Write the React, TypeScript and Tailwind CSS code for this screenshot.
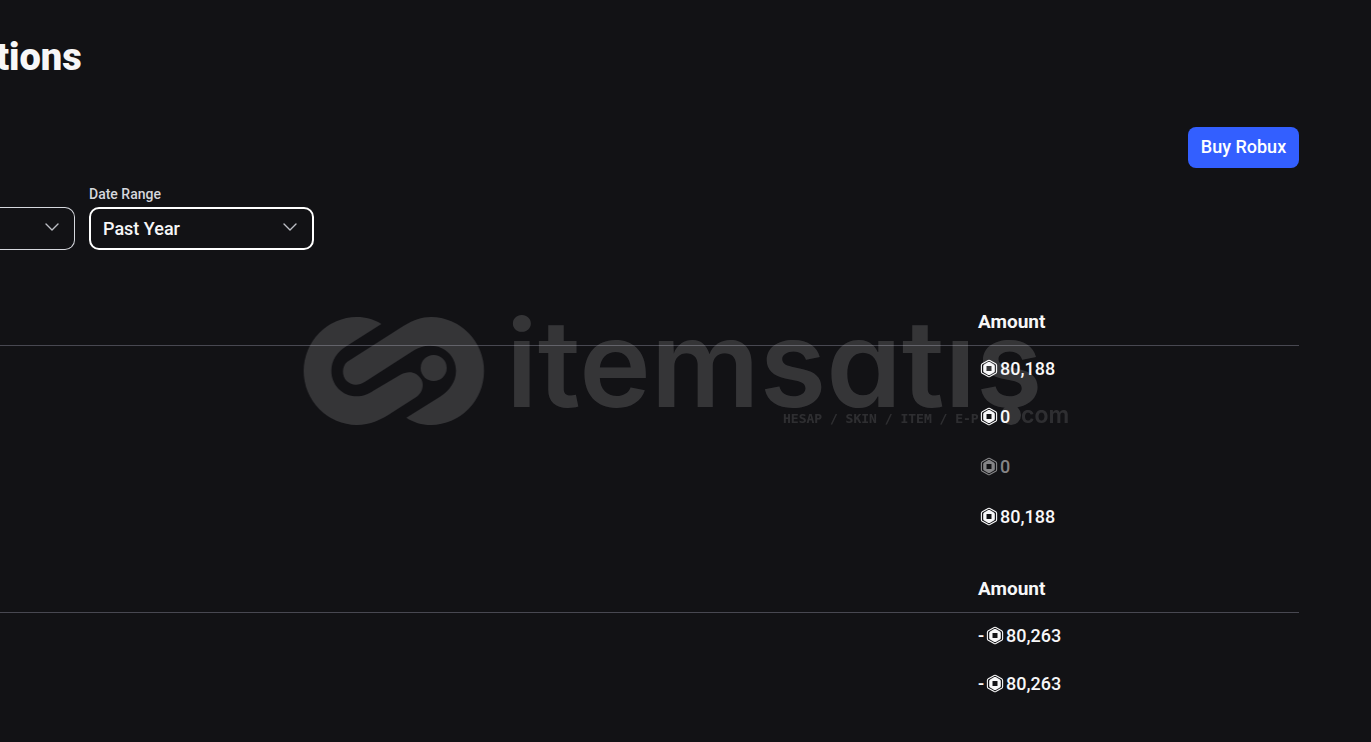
import { useState } from 'react'
import { ChevronDown } from 'lucide-react'

type Row = { amount: string; negative?: boolean; muted?: boolean }

const incoming: Row[] = [
  { amount: '80,188' },
  { amount: '0' },
  { amount: '0', muted: true },
  { amount: '80,188' },
]

const outgoing: Row[] = [
  { amount: '80,263', negative: true },
  { amount: '80,263', negative: true },
]

function RobuxIcon() {
  return (
    <svg width="18" height="20" viewBox="0 0 18 20" fill="none" aria-hidden="true">
      <path
        d="M8.2 1.4Q9 1 9.8 1.4L15.7 4.7Q16.6 5.3 16.6 6.3V12.7Q16.6 13.7 15.7 14.3L9.8 17.6Q9 18 8.2 17.6L2.3 14.3Q1.4 13.7 1.4 12.7V6.3Q1.4 5.3 2.3 4.7Z"
        stroke="currentColor"
        strokeWidth="1.1"
        strokeLinejoin="round"
      />
      <path
        fillRule="evenodd"
        fill="currentColor"
        d="M8.2 3.1Q9 2.7 9.8 3.1L13.9 5.4Q14.8 5.9 14.8 6.9V12.1Q14.8 13.1 13.9 13.6L9.8 15.9Q9 16.3 8.2 15.9L4.1 13.6Q3.2 13.1 3.2 12.1V6.9Q3.2 5.9 4.1 5.4ZM6.5 7V12H11.5V7Z"
      />
    </svg>
  )
}

function AmountTable({ rows }: { rows: Row[] }) {
  return (
    <table className="w-full table-fixed border-collapse text-left text-lg">
      <thead>
        <tr className="h-[47px] border-b border-[#484851]">
          <td />
          <th scope="col" className="w-[321px] pt-0.5 text-[19px] font-bold">Amount</th>
        </tr>
      </thead>
      <tbody className="font-medium">
        {rows.map((row, i) => (
          <tr key={i} className={i < 1 ? 'h-[46px]' : 'h-[50px]'}>
            <td />
            <td className={row.muted ? 'pt-0.5 text-[#858587]' : 'pt-0.5'}>
              <span className={`flex items-center gap-0.5 ${row.negative ? '' : 'pl-0.5'}`}>
                {row.negative && <span className="w-1.5">-</span>}
                <RobuxIcon />
                {row.amount}
              </span>
            </td>
          </tr>
        ))}
      </tbody>
    </table>
  )
}

function Watermark() {
  return (
    <div className="pointer-events-none fixed inset-0 flex items-center justify-center text-white">
      <svg width="766" height="108" viewBox="0 0 766 108" fill="currentColor" className="overflow-visible">
        <g opacity="0.15">
          <g transform="translate(-13 -17) scale(0.33333)">
            <path d="M274 72C252 58 228 51 200 51A160 162 0 0 0 41 213A160 162 0 0 0 200 375C240 375 275 358 305 338L380 290C400 276 402 250 393 237C380 215 355 210 330 225L250 272C235 282 220 289 200 289C155 289 124 253 124 213C124 180 142 155 170 138Z" />
            <path d="M172 185L340 78C370 60 395 51 423 51A160 162 0 0 1 582 213A160 162 0 0 1 423 375C395 375 370 367 349 353L450 290C480 270 498 245 498 212C498 170 465 137 422 137C400 137 385 142 365 155L225 245C205 258 185 257 170 243C155 228 155 198 172 185Z" />
            <circle cx="431" cy="204" r="39" />
          </g>
          <text x="203" y="90" fontSize="121" className="font-['Inter',sans-serif] font-semibold [font-feature-settings:'cv11']">
            itemsatıs
          </text>
          <circle cx="708" cy="98" r="10" />
        </g>
        <text x="480" y="106" fontSize="13" opacity="0.12" className="font-['DejaVu_Sans_Mono',monospace] font-bold">
          HESAP / SKIN / ITEM / E-P
        </text>
        <text x="718" y="106" fontSize="23" opacity="0.12" className="font-['Inter',sans-serif] font-semibold">
          com
        </text>
      </svg>
    </div>
  )
}

export default function App() {
  const [range, setRange] = useState('Past Year')

  return (
    <div className="min-h-screen overflow-hidden bg-[#121215] pr-[72px] font-['Roboto',sans-serif] text-[#f7f7f8]">
      <h1 className="-ml-1 pt-[34px] text-[38px] leading-[46px] font-black">tions</h1>

      <div className="mt-[47px] flex justify-end">
        <button className="h-[41px] min-w-[111px] rounded-lg bg-[#335fff] px-3 pb-0.5 text-lg font-medium text-white">
          Buy Robux
        </button>
      </div>

      <div className="mt-[17px] flex items-end gap-[14px]">
        <div className="relative w-[75px]">
          <select
            aria-label="Transaction type"
            className="block h-[43px] w-full appearance-none rounded-r-[10px] border border-l-0 border-[#d5d7dd] bg-transparent"
          />
          <ChevronDown size={24} strokeWidth={1.4} className="pointer-events-none absolute top-2 right-[11px] text-[#bcbec4]" />
        </div>
        <div className="w-[225px]">
          <label htmlFor="range" className="block pb-1 text-sm leading-[18px] font-medium text-[#d5d7dd]">
            Date Range
          </label>
          <div className="relative">
            <select
              id="range"
              value={range}
              onChange={e => setRange(e.target.value)}
              className="block h-[43px] w-full appearance-none rounded-[10px] border-2 border-white bg-transparent px-3 text-lg font-medium outline-none"
            >
              <option>Past Year</option>
            </select>
            <ChevronDown size={24} strokeWidth={1.4} className="pointer-events-none absolute top-2 right-3 text-[#bcbec4]" />
          </div>
        </div>
      </div>

      <div className="mt-12 flex flex-col gap-6">
        <AmountTable rows={incoming} />
        <AmountTable rows={outgoing} />
      </div>

      <Watermark />
    </div>
  )
}
